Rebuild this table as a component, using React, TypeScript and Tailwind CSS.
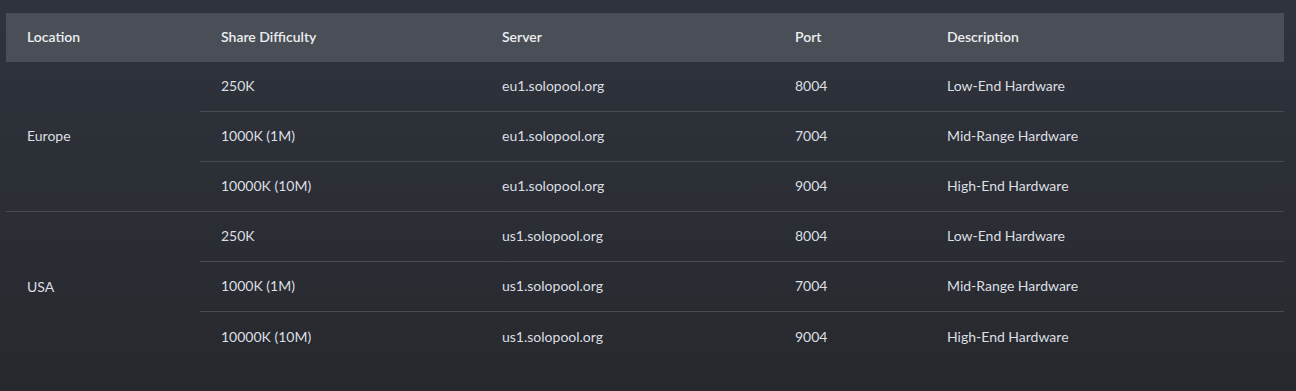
import React from 'react';

interface PoolRow {
  difficulty: string;
  server: string;
  port: string;
  description: string;
}

interface Region {
  location: string;
  rows: PoolRow[];
}

const regions: Region[] = [
  {
    location: 'Europe',
    rows: [
      { difficulty: '250K', server: 'eu1.solopool.org', port: '8004', description: 'Low-End Hardware' },
      { difficulty: '1000K (1M)', server: 'eu1.solopool.org', port: '7004', description: 'Mid-Range Hardware' },
      { difficulty: '10000K (10M)', server: 'eu1.solopool.org', port: '9004', description: 'High-End Hardware' },
    ],
  },
  {
    location: 'USA',
    rows: [
      { difficulty: '250K', server: 'us1.solopool.org', port: '8004', description: 'Low-End Hardware' },
      { difficulty: '1000K (1M)', server: 'us1.solopool.org', port: '7004', description: 'Mid-Range Hardware' },
      { difficulty: '10000K (10M)', server: 'us1.solopool.org', port: '9004', description: 'High-End Hardware' },
    ],
  },
];

const App: React.FC = () => {
  return (
    <div
      className="min-h-[391px] w-full bg-gradient-to-b from-[#2f333c] to-[#27292e] pt-[13px] pl-[6px] pr-[12px]"
      style={{ fontFamily: 'Lato, "Open Sans", sans-serif' }}
    >
      <table className="w-full table-fixed border-separate border-spacing-0 text-[14px]">
        <colgroup>
          <col className="w-[194px]" />
          <col className="w-[281px]" />
          <col className="w-[293px]" />
          <col className="w-[152px]" />
          <col />
        </colgroup>
        <thead>
          <tr className="bg-[#4a4e56] text-left text-[#eceef1]">
            <th className="h-[49px] px-[21px] pb-[2px] font-semibold">Location</th>
            <th className="h-[49px] px-[21px] pb-[2px] font-semibold">Share Difficulty</th>
            <th className="h-[49px] px-[21px] pb-[2px] font-semibold">Server</th>
            <th className="h-[49px] px-[21px] pb-[2px] font-semibold">Port</th>
            <th className="h-[49px] px-[21px] pb-[2px] font-semibold">Description</th>
          </tr>
        </thead>
        <tbody className="text-[#dcdfe3]">
          {regions.map((region, ri) => {
            const lastRegion = ri === regions.length - 1;
            return region.rows.map((row, i) => {
              const last = lastRegion && i === region.rows.length - 1;
              const cell = `h-[50px] px-[21px] pb-[2px] align-middle ${last ? '' : 'border-b border-[#484b52]'}`;
              return (
                <tr key={region.location + i}>
                  {i === 0 && (
                    <td
                      rowSpan={region.rows.length}
                      className={`px-[21px] pb-[2px] align-middle ${lastRegion ? '' : 'border-b border-[#484b52]'}`}
                    >
                      {region.location}
                    </td>
                  )}
                  <td className={cell}>{row.difficulty}</td>
                  <td className={cell}>{row.server}</td>
                  <td className={cell}>{row.port}</td>
                  <td className={cell}>{row.description}</td>
                </tr>
              );
            });
          })}
        </tbody>
      </table>
    </div>
  );
};

export default App;
